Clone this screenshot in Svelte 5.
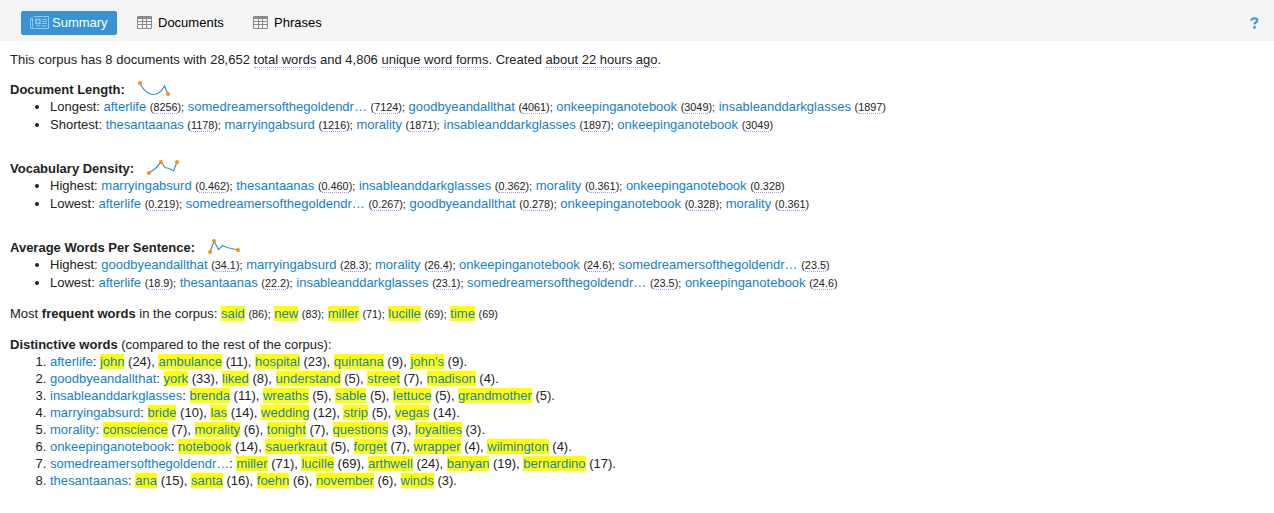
<script>
  const long = 'somedreamersofthegoldendr…';
  const sections = [
    {
      title: 'Document Length', path: 'M3 3.5C7 11 11 14.5 16 14.5C20 14.5 24 12.5 27.5 6L31 14.5', dots: [[3, 3], [31, 14]],
      rows: [
        ['Longest', [['afterlife', '8256'], [long, '7124'], ['goodbyeandallthat', '4061'], ['onkeepinganotebook', '3049'], ['insableanddarkglasses', '1897']]],
        ['Shortest', [['thesantaanas', '1178'], ['marryingabsurd', '1216'], ['morality', '1871'], ['insableanddarkglasses', '1897'], ['onkeepinganotebook', '3049']]]
      ]
    },
    {
      title: 'Vocabulary Density', path: 'M3 14L10 9L15 3L19 8.5L23 9.5L27.5 12L31 3', dots: [[3, 14], [15, 3], [31, 3]],
      rows: [
        ['Highest', [['marryingabsurd', '0.462'], ['thesantaanas', '0.460'], ['insableanddarkglasses', '0.362'], ['morality', '0.361'], ['onkeepinganotebook', '0.328']]],
        ['Lowest', [['afterlife', '0.219'], [long, '0.267'], ['goodbyeandallthat', '0.278'], ['onkeepinganotebook', '0.328'], ['morality', '0.361']]]
      ]
    },
    {
      title: 'Average Words Per Sentence', path: 'M3 14L7 3L11.5 11.5L15.5 7.5L20 9.5L31 12', dots: [[3, 14], [7, 3], [31, 12]],
      rows: [
        ['Highest', [['goodbyeandallthat', '34.1'], ['marryingabsurd', '28.3'], ['morality', '26.4'], ['onkeepinganotebook', '24.6'], [long, '23.5']]],
        ['Lowest', [['afterlife', '18.9'], ['thesantaanas', '22.2'], ['insableanddarkglasses', '23.1'], [long, '23.5'], ['onkeepinganotebook', '24.6']]]
      ]
    }
  ];
  const frequent = [['said', 86], ['new', 83], ['miller', 71], ['lucille', 69], ['time', 69]];
  const distinctive = [
    ['afterlife', [['john', 24], ['ambulance', 11], ['hospital', 23], ['quintana', 9], ["john's", 9]]],
    ['goodbyeandallthat', [['york', 33], ['liked', 8], ['understand', 5], ['street', 7], ['madison', 4]]],
    ['insableanddarkglasses', [['brenda', 11], ['wreaths', 5], ['sable', 5], ['lettuce', 5], ['grandmother', 5]]],
    ['marryingabsurd', [['bride', 10], ['las', 14], ['wedding', 12], ['strip', 5], ['vegas', 14]]],
    ['morality', [['conscience', 7], ['morality', 6], ['tonight', 7], ['questions', 3], ['loyalties', 3]]],
    ['onkeepinganotebook', [['notebook', 14], ['sauerkraut', 5], ['forget', 7], ['wrapper', 4], ['wilmington', 4]]],
    [long, [['miller', 71], ['lucille', 69], ['arthwell', 24], ['banyan', 19], ['bernardino', 17]]],
    ['thesantaanas', [['ana', 15], ['santa', 16], ['foehn', 6], ['november', 6], ['winds', 3]]]
  ];
</script>

{#snippet table()}
  <svg width="15" height="13" viewBox="0 0 15 13"><rect width="15" height="13" rx="1" fill="#8a8a8a" /><path fill="#f5f5f5" d="M1 3h4v2H1zM6 3h3v2H6zM10 3h4v2h-4zM1 6h4v2H1zM6 6h3v2H6zM10 6h4v2h-4zM1 9h4v3H1zM6 9h3v3H6zM10 9h4v3h-4z" /></svg>
{/snippet}

<header>
  <button class="tab active">
    <svg width="19" height="13" viewBox="0 0 19 13" fill="none" stroke="#9ac8e9"><path d="M3.5 .5h15v12h-16q-2 0-2-2v-8h2v8q0 2-1 2" /><path d="M6 3.5h4v4H6z" stroke-width="1.5" /><path d="M12 3.5h5M12 5.5h5M12 7.5h5M5.5 10h5M12 10h5" /></svg>
    <span>Summary</span>
  </button>
  <button class="tab docs">{@render table()}<span>Documents</span></button>
  <button class="tab phrases">{@render table()}<span>Phrases</span></button>
  <svg class="help" width="9" height="12" viewBox="0 0 9 12"><path d="M1.2 3.7Q2 1.4 4.3 1.4Q7.2 1.4 7.2 3.5Q7.2 4.6 5.8 5.4Q4.5 6.1 4.5 7.5" fill="none" stroke="#4a9eda" stroke-width="2.4" /><path d="M3.2 9h2.6v2.6H3.2z" fill="#4a9eda" /></svg>
</header>
<main>
  <p class="intro">This corpus has 8 documents with 28,652 <u>total words</u> and 4,806 <u>unique word forms</u>. Created <u>about 22 hours ago</u>.</p>
  {#each sections as s}
    <section>
      <h2>{s.title}:<svg width="35" height="18" viewBox="0 0 35 18"><path d={s.path} fill="none" stroke="#3892d4" stroke-width="1.2" />{#each s.dots as d}<circle cx={d[0]} cy={d[1]} r="2" fill="#ff8c0a" />{/each}</svg></h2>
      <ul>
        {#each s.rows as [label, items]}
          <li>{label}: {#each items as [name, n], i}<a href="#top">{name}</a>{' '}<small>(<u>{n}</u>){i < 4 ? ';' : ''}</small>{' '}{/each}</li>
        {/each}
      </ul>
    </section>
  {/each}
  <p class="frequent">Most <b>frequent words</b> in the corpus: {#each frequent as [w, n], i}<a class="mark" href="#top">{w}</a>{' '}<small>({n}){i < 4 ? ';' : ''}</small>{' '}{/each}</p>
  <p class="distinct"><b>Distinctive words</b> (compared to the rest of the corpus):</p>
  <ol>
    {#each distinctive as [name, words]}
      <li><a href="#top">{name}</a>: {#each words as [w, n], i}<a class="mark" href="#top">{w}</a> ({n}){i < 4 ? ', ' : '.'}{/each}</li>
    {/each}
  </ol>
</main>

<style>
  :global(body) { background: #fff; font-family: "Liberation Sans", Arial, sans-serif; font-size: 13px; color: #222; }
  header { height: 41px; background: #f5f5f5; display: flex; box-sizing: border-box; padding: 11px 15px 0 21px; }
  .tab { height: 24px; border: 0; padding: 0 9px 2px; background: none; border-radius: 2px; display: flex; align-items: center; gap: 3px; font: 13px "Liberation Sans", Arial, sans-serif; color: #000; box-sizing: border-box; }
  .tab.active { background: #3892d4; color: #fff; width: 96px; }
  .docs { margin-left: 11px; gap: 6px; width: 107px; }
  .phrases { margin-left: 9px; gap: 6px; }
  .tab svg { flex: none; }
  .help { margin: 6px 0 0 auto; }
  main { padding: 10px 10px 0; white-space: nowrap; }
  p { margin: 0; line-height: 18px; }
  .intro { margin-bottom: 12px; }
  section { height: 79px; }
  h2 { margin: 0; font-size: 13px; line-height: 18px; height: 17px; display: flex; }
  h2 svg { margin: -1px 0 0 12px; }
  ul, ol { margin: 0; padding-left: 40px; }
  ul li { line-height: 18px; height: 18px; }
  ol li { line-height: 17px; height: 17px; }
  a { color: #157fcc; text-decoration: none; }
  u { text-decoration: none; border-bottom: 1px dotted #99f; }
  small { font-size: 10.83px; line-height: 1; }
  .mark { background: #ff0; }
  .frequent { margin-top: -13px; }
  .distinct { margin-top: 13px; line-height: 17px; }
</style>
